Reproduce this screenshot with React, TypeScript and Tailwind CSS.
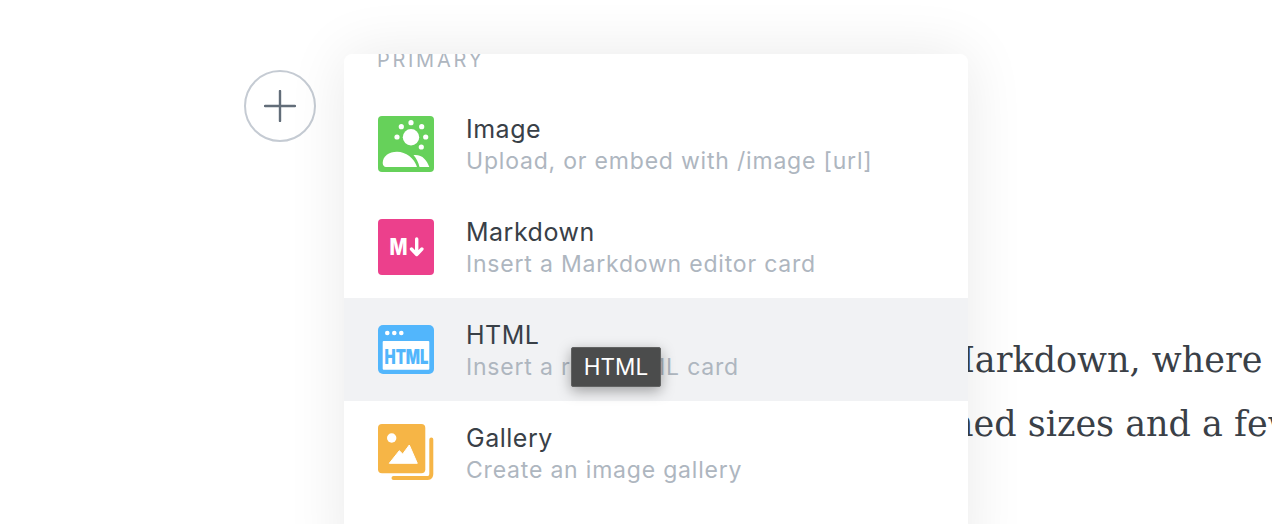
import React from "react";

function ImageIcon() {
  return (
    <svg width="56" height="56" viewBox="0 0 56 56">
      <rect width="56" height="56" rx="4" fill="#66d15a" />
      <circle cx="33" cy="21.3" r="8.2" fill="#fff" />
      <circle cx="33" cy="6.7" r="2.6" fill="#fff" />
      <circle cx="23.3" cy="10.7" r="2.6" fill="#fff" />
      <circle cx="43.7" cy="10.7" r="2.6" fill="#fff" />
      <circle cx="19" cy="21" r="2.6" fill="#fff" />
      <circle cx="47.7" cy="21" r="2.6" fill="#fff" />
      <circle cx="43.3" cy="31" r="2.6" fill="#fff" />
      <path d="M4.7 47C4.7 40 11 35.7 19 35.7C28 35.7 36 42 39 51H8C6 51 4.7 49 4.7 47z" fill="#fff" />
      <path d="M35.5 39C44 38 49 44 51.3 51H41.5C40.5 46.5 38.5 42.5 35.5 39z" fill="#fff" />
    </svg>
  );
}

function MarkdownIcon() {
  return (
    <svg width="56" height="56" viewBox="0 0 56 56">
      <rect width="56" height="56" rx="4" fill="#ec408c" />
      <text x="11.5" y="36" fontFamily="Inter, sans-serif" fontWeight="800" fontSize="23" fill="#fff" textLength="18" lengthAdjust="spacingAndGlyphs">M</text>
      <path d="M38.7 20v15M33.5 30l5.2 5.5 5.2-5.5" fill="none" stroke="#fff" strokeWidth="3.4" strokeLinecap="round" strokeLinejoin="round" />
    </svg>
  );
}

function HtmlIcon() {
  return (
    <svg className="-mt-px" width="56" height="49" viewBox="0 0 56 49">
      <rect width="56" height="49" rx="5" fill="#52b6fc" />
      <rect x="4.7" y="16" width="46.6" height="28.7" rx="1" fill="#fff" />
      <circle cx="9.3" cy="8" r="2.3" fill="#fff" />
      <circle cx="16.3" cy="8" r="2.3" fill="#fff" />
      <circle cx="23.3" cy="8" r="2.3" fill="#fff" />
      <text x="6.5" y="38.5" fontFamily="Inter, sans-serif" fontWeight="900" fontSize="20" fill="#52b6fc" textLength="44" lengthAdjust="spacingAndGlyphs">HTML</text>
    </svg>
  );
}

function GalleryIcon() {
  return (
    <svg className="-mt-px" width="56" height="56" viewBox="0 0 56 56">
      <rect width="47.3" height="49.3" rx="4" fill="#f6b546" />
      <circle cx="13.7" cy="14" r="4.7" fill="#fff" />
      <path d="M11.3 39.3 21.3 26.7 24.7 30 31.3 21 39.3 39.3z" fill="#fff" strokeLinejoin="round" stroke="#fff" />
      <path d="M53.3 15.5V50c0 2-1 4-3.5 4H15.5" fill="none" stroke="#f6b546" strokeWidth="4" strokeLinecap="round" />
    </svg>
  );
}

const items = [
  { title: "Image", sub: "Upload, or embed with /image [url]", icon: <ImageIcon /> },
  { title: "Markdown", sub: "Insert a Markdown editor card", icon: <MarkdownIcon /> },
  { title: "HTML", sub: "Insert a raw HTML card", icon: <HtmlIcon />, active: true },
  { title: "Gallery", sub: "Create an image gallery", icon: <GalleryIcon /> },
];

export default function App() {
  return (
    <div className="relative h-[524px] w-[1272px] overflow-hidden bg-white font-['Inter',sans-serif]">
      {/* Post text behind the menu */}
      <div className="whitespace-nowrap pt-[328px] font-['DejaVu_Serif',serif] text-[35px] leading-[64px] text-[#3a4047]">
        <p className="ml-[939px]">Markdown, where</p>
        <p className="ml-[951px]">ned sizes and a few</p>
      </div>

      {/* Plus button */}
      <button className="absolute left-[244px] top-[70px] flex h-[72px] w-[72px] items-center justify-center rounded-full border-2 border-[#c5cbd3] bg-white">
        <svg width="32" height="32" viewBox="0 0 32 32" fill="none" stroke="#626d79" strokeWidth="2.4" strokeLinecap="round">
          <path d="M16 1v30M1 16h30" />
        </svg>
      </button>

      {/* Card menu */}
      <div className="absolute left-[344px] top-[54px] h-[520px] w-[624px] overflow-hidden rounded-t-lg bg-white shadow-[0_0_60px_rgba(0,0,0,0.09)]">
        <div className="mt-[-6px] h-[44px] pl-[33px] text-[20px] leading-[24px] tracking-[2.7px] text-[#aeb6bf]">PRIMARY</div>
        {items.map((item) => (
          <div
            key={item.title}
            className={
              item.active
                ? "flex h-[103px] items-center gap-[32px] bg-[#f1f2f4] pl-[34px]"
                : "flex h-[103px] items-center gap-[32px] pl-[34px]"
            }
          >
            <div className="flex w-[56px] shrink-0 items-center">{item.icon}</div>
            <div className="flex flex-col pt-[2px]">
              <span className="text-[25px] leading-[32px] tracking-[0.5px] text-[#394047]">{item.title}</span>
              <span className="text-[23px] leading-[32px] tracking-[0.8px] text-[#aeb6bf]">{item.sub}</span>
            </div>
          </div>
        ))}
      </div>

      {/* Tooltip */}
      <div className="absolute left-[571px] top-[347px] flex h-[40px] w-[90px] items-center justify-center rounded-[2px] border border-[#626363] bg-[#4b4c4c] text-[22.5px] text-white shadow-[0_4px_14px_rgba(0,0,0,0.35)]">
        HTML
      </div>
    </div>
  );
}
